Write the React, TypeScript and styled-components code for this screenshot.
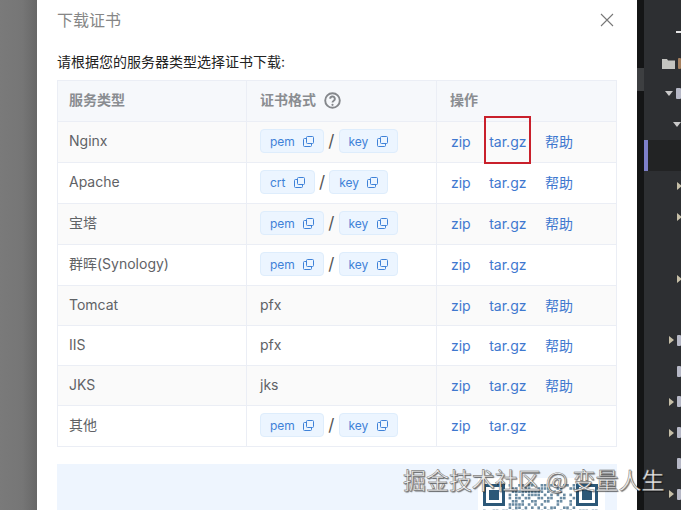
import styled, { createGlobalStyle } from 'styled-components';

const GlobalStyle = createGlobalStyle`
  html, body {
    margin: 0;
    padding: 0;
    overflow: hidden;
    background: #767676;
  }
`;

const Screen = styled.div`
  position: relative;
  width: 681px;
  height: 510px;
  display: flex;
  overflow: hidden;
  font-family: Inter, 'Noto Sans CJK SC', sans-serif;
`;

const Backdrop = styled.div`
  width: 37px;
  flex: none;
  background: linear-gradient(90deg, #7a7a7a 0%, #767676 60%, #676767 100%);
`;

const Modal = styled.div`
  width: 600px;
  flex: none;
  box-sizing: border-box;
  background: #fff;
  padding: 0 20px;
`;

const ModalHeader = styled.div`
  height: 40px;
  display: flex;
  align-items: center;
  justify-content: space-between;
  font-size: 16px;
  line-height: 20px;
  color: #868686;
  padding-right: 3px;
  span {
    margin-bottom: 1px;
  }
`;

const Intro = styled.div`
  margin-top: 11px;
  height: 22px;
  line-height: 22px;
  font-size: 14px;
  color: #222;
`;

const Table = styled.div`
  margin-top: 7px;
  border: 1px solid #ebeef5;
  border-bottom: none;
`;

const Row = styled.div<{ $h: number; $bg: string }>`
  position: relative;
  display: grid;
  grid-template-columns: 189px 190px 1fr;
  box-sizing: border-box;
  height: ${(p) => p.$h}px;
  background: ${(p) => p.$bg};
  border-bottom: 1px solid #ebeef5;
`;

const Cell = styled.div<{ $head?: boolean; $first?: boolean }>`
  display: flex;
  align-items: center;
  padding-left: ${(p) => (p.$first ? 11 : 13)}px;
  padding-bottom: 2px;
  font-size: 14px;
  line-height: 20px;
  font-weight: ${(p) => (p.$head ? 700 : 400)};
  color: ${(p) => (p.$head ? '#8a8d91' : '#5f6266')};
  border-right: 1px solid #ebeef5;
  &:last-child {
    border-right: none;
  }
`;

const ActionCell = styled(Cell)`
  padding-left: 14px;
  padding-bottom: 0;
  gap: 18.5px;
`;

const Link = styled.span`
  color: #3f78cf;
  font-size: 14px;
`;

const Tag = styled.span`
  height: 24px;
  box-sizing: border-box;
  display: inline-flex;
  align-items: center;
  gap: 8.5px;
  padding: 1px 9px 0;
  background: #ecf5ff;
  border: 1px solid #deedfc;
  border-radius: 4px;
  color: #3f82d8;
  font-size: 12px;
`;

const Slash = styled.span`
  margin: 0 4px;
  font-size: 17px;
  color: #555;
`;

const HelpIcon = styled.svg`
  margin-left: 8px;
`;

const Notice = styled.div`
  margin-top: 17px;
  height: 60px;
  background: #eef5fe;
  display: flex;
  justify-content: flex-end;
  padding: 14px 12px 0 0;
`;

const QrBox = styled.div`
  width: 127px;
  height: 60px;
  background: #fff;
  padding: 6px 0 0 5px;
  box-sizing: border-box;
`;

const RedBox = styled.div`
  position: absolute;
  left: 484px;
  top: 116px;
  width: 47px;
  height: 48px;
  box-sizing: border-box;
  border: 2px solid #c9202b;
`;

const Watermark = styled.div`
  position: absolute;
  left: 403px;
  top: 464px;
  font-size: 23px;
  line-height: 30px;
  white-space: nowrap;
  font-family: 'Noto Sans CJK SC', sans-serif;
  letter-spacing: -0.05px;
  color: #ececec;
  -webkit-text-stroke: 0.4px #555;
  text-shadow: 1px 1px 1px rgba(0, 0, 0, 0.55);
`;

const Gutter = styled.div`
  width: 7px;
  flex: none;
  background: #141516;
  display: flex;
  flex-direction: column;
  padding-top: 68px;
`;

const Thumb = styled.div`
  height: 23px;
  background: #3d3f41;
`;

const Editor = styled.div`
  flex: 1;
  background: #2d2f32;
  padding-top: 17px;
  overflow: hidden;
`;

const TreeRow = styled.div<{ $indent: number; $selected?: boolean }>`
  height: 30.8px;
  display: flex;
  align-items: center;
  gap: 3px;
  padding-left: ${(p) => p.$indent}px;
  background: ${(p) => (p.$selected ? '#222324' : 'transparent')};
  box-shadow: ${(p) => (p.$selected ? 'inset 4px 0 0 #7d7fc9' : 'none')};
`;

const Arrow = styled.span<{ $open?: boolean }>`
  width: 0;
  height: 0;
  ${(p) =>
    p.$open
      ? `border-left: 4px solid transparent;
         border-right: 4px solid transparent;
         border-top: 5px solid #c9c9c9;`
      : `border-top: 4px solid transparent;
         border-bottom: 4px solid transparent;
         border-left: 5px solid #c6bfa8;`}
`;

const FileBlock = styled.span<{ $tint?: string }>`
  width: 10px;
  height: 11px;
  border-radius: 1px;
  background: ${(p) => p.$tint ?? '#b6b8c6'};
`;

const Dash = styled.span`
  width: 8px;
  height: 2px;
  background: #e6e6e6;
`;

const Folder = styled.svg`
  flex: none;
`;

type TableRow = {
  name: string;
  format: string[] | string;
  help: boolean;
  h: number;
};

const rows: TableRow[] = [
  { name: 'Nginx', format: ['pem', 'key'], help: true, h: 41 },
  { name: 'Apache', format: ['crt', 'key'], help: true, h: 41 },
  { name: '宝塔', format: ['pem', 'key'], help: true, h: 41 },
  { name: '群晖(Synology)', format: ['pem', 'key'], help: false, h: 41 },
  { name: 'Tomcat', format: 'pfx', help: true, h: 40 },
  { name: 'IIS', format: 'pfx', help: true, h: 40 },
  { name: 'JKS', format: 'jks', help: true, h: 40 },
  { name: '其他', format: ['pem', 'key'], help: false, h: 41 },
];

const tree: { indent: number; arrow?: 'open' | 'closed'; block?: boolean; selected?: boolean; folder?: boolean; tint?: string }[] = [
  { indent: 18, folder: true, block: true, tint: '#a5805f' },
  { indent: 21, arrow: 'open', block: true },
  { indent: 29, arrow: 'open' },
  { indent: 0, selected: true },
  { indent: 33, arrow: 'closed' },
  { indent: 33, arrow: 'closed' },
  { indent: 0 },
  { indent: 33, arrow: 'closed' },
  { indent: 0 },
  { indent: 25, arrow: 'closed', block: true },
  { indent: 33, block: true },
  { indent: 25, arrow: 'closed', block: true },
  { indent: 25, arrow: 'closed', block: true },
  { indent: 33, block: true },
  { indent: 25, arrow: 'closed', block: true },
];

function CopyIcon() {
  return (
    <svg width="11" height="11" viewBox="0 0 11 11" fill="none" stroke="currentColor" strokeWidth="1">
      <rect x="3.5" y="0.5" width="7" height="7" rx="1" />
      <path d="M3.5 2.5H1.5a1 1 0 0 0-1 1v6a1 1 0 0 0 1 1h6a1 1 0 0 0 1-1V7.5" />
    </svg>
  );
}

// 가짜 QR: finder 2개 + 고정 시드 점들
function QrCode() {
  const color = '#2c5878';
  const step = 3.2;
  const dots = [];
  for (let y = 0; y < 17; y++) {
    for (let x = 0; x < 36; x++) {
      const px = x * step;
      const py = y * step;
      const hitsFinder = py < 25 && (px < 25 || px > 90);
      if (hitsFinder) continue;
      const hash = (x * 31 + y * 17 + x * y * 7 + (x ^ y) * 13) % 7;
      if (hash < 4) {
        dots.push(<rect key={`${x}-${y}`} x={px} y={py} width={2.6} height={2.6} fill="#6b8ca3" />);
      }
    }
  }
  const finder = (x: number) => (
    <g key={x}>
      <rect x={x + 1.5} y={1.5} width={19} height={19} fill="none" stroke={color} strokeWidth="3" />
      <rect x={x + 6} y={6} width={10} height={10} fill={color} />
    </g>
  );
  return (
    <svg width="116" height="54" viewBox="0 0 116 54">
      {dots}
      {finder(0)}
      {finder(93)}
    </svg>
  );
}

export default function App() {
  return (
    <>
      <GlobalStyle />
      <Screen>
        <Backdrop />
        <Modal>
          <ModalHeader>
            <span>下载证书</span>
            <svg width="14" height="14" viewBox="0 0 14 14" stroke="#777" strokeWidth="1.1">
              <path d="M1 1l12 12M13 1L1 13" />
            </svg>
          </ModalHeader>
          <Intro>请根据您的服务器类型选择证书下载:</Intro>
          <Table>
            <Row $h={41} $bg="#f6f8fb">
              <Cell $head $first>服务类型</Cell>
              <Cell $head>
                证书格式
                <HelpIcon width="17" height="17" viewBox="0 0 17 17" fill="none">
                  <circle cx="8.5" cy="8.5" r="7.3" stroke="#85888c" strokeWidth="1.9" />
                  <path d="M6.2 6.8a2.3 2.3 0 1 1 3.5 1.9c-.8.5-1.2.9-1.2 1.7" stroke="#85888c" strokeWidth="1.9" />
                  <circle cx="8.5" cy="12.8" r="1.1" fill="#85888c" />
                </HelpIcon>
              </Cell>
              <Cell $head>操作</Cell>
            </Row>
            {rows.map((row, index) => (
              <Row key={row.name} $h={row.h} $bg={index % 2 === 0 ? '#fafafa' : '#fff'}>
                <Cell $first>{row.name}</Cell>
                <Cell>
                  {typeof row.format === 'string' ? (
                    row.format
                  ) : (
                    <>
                      <Tag>
                        {row.format[0]}
                        <CopyIcon />
                      </Tag>
                      <Slash>/</Slash>
                      <Tag>
                        {row.format[1]}
                        <CopyIcon />
                      </Tag>
                    </>
                  )}
                </Cell>
                <ActionCell>
                  <Link>zip</Link>
                  <Link>tar.gz</Link>
                  {row.help && <Link>帮助</Link>}
                </ActionCell>
              </Row>
            ))}
          </Table>
          <Notice>
            <QrBox>
              <QrCode />
            </QrBox>
          </Notice>
        </Modal>
        <Gutter>
          <Thumb />
        </Gutter>
        <Editor>
          <TreeRow $indent={32}>
            <Dash />
          </TreeRow>
          {tree.map((item, index) => (
            <TreeRow key={index} $indent={item.indent} $selected={item.selected}>
              {item.folder && (
                <Folder width="13" height="11" viewBox="0 0 13 11">
                  <path d="M0 1h5l1 1.5h7V11H0z" fill="#c4c4c0" />
                </Folder>
              )}
              {item.arrow && <Arrow $open={item.arrow === 'open'} />}
              {item.block && <FileBlock $tint={item.tint} />}
            </TreeRow>
          ))}
        </Editor>
        <RedBox />
        <Watermark>掘金技术社区 @ 变量人生</Watermark>
      </Screen>
    </>
  );
}
